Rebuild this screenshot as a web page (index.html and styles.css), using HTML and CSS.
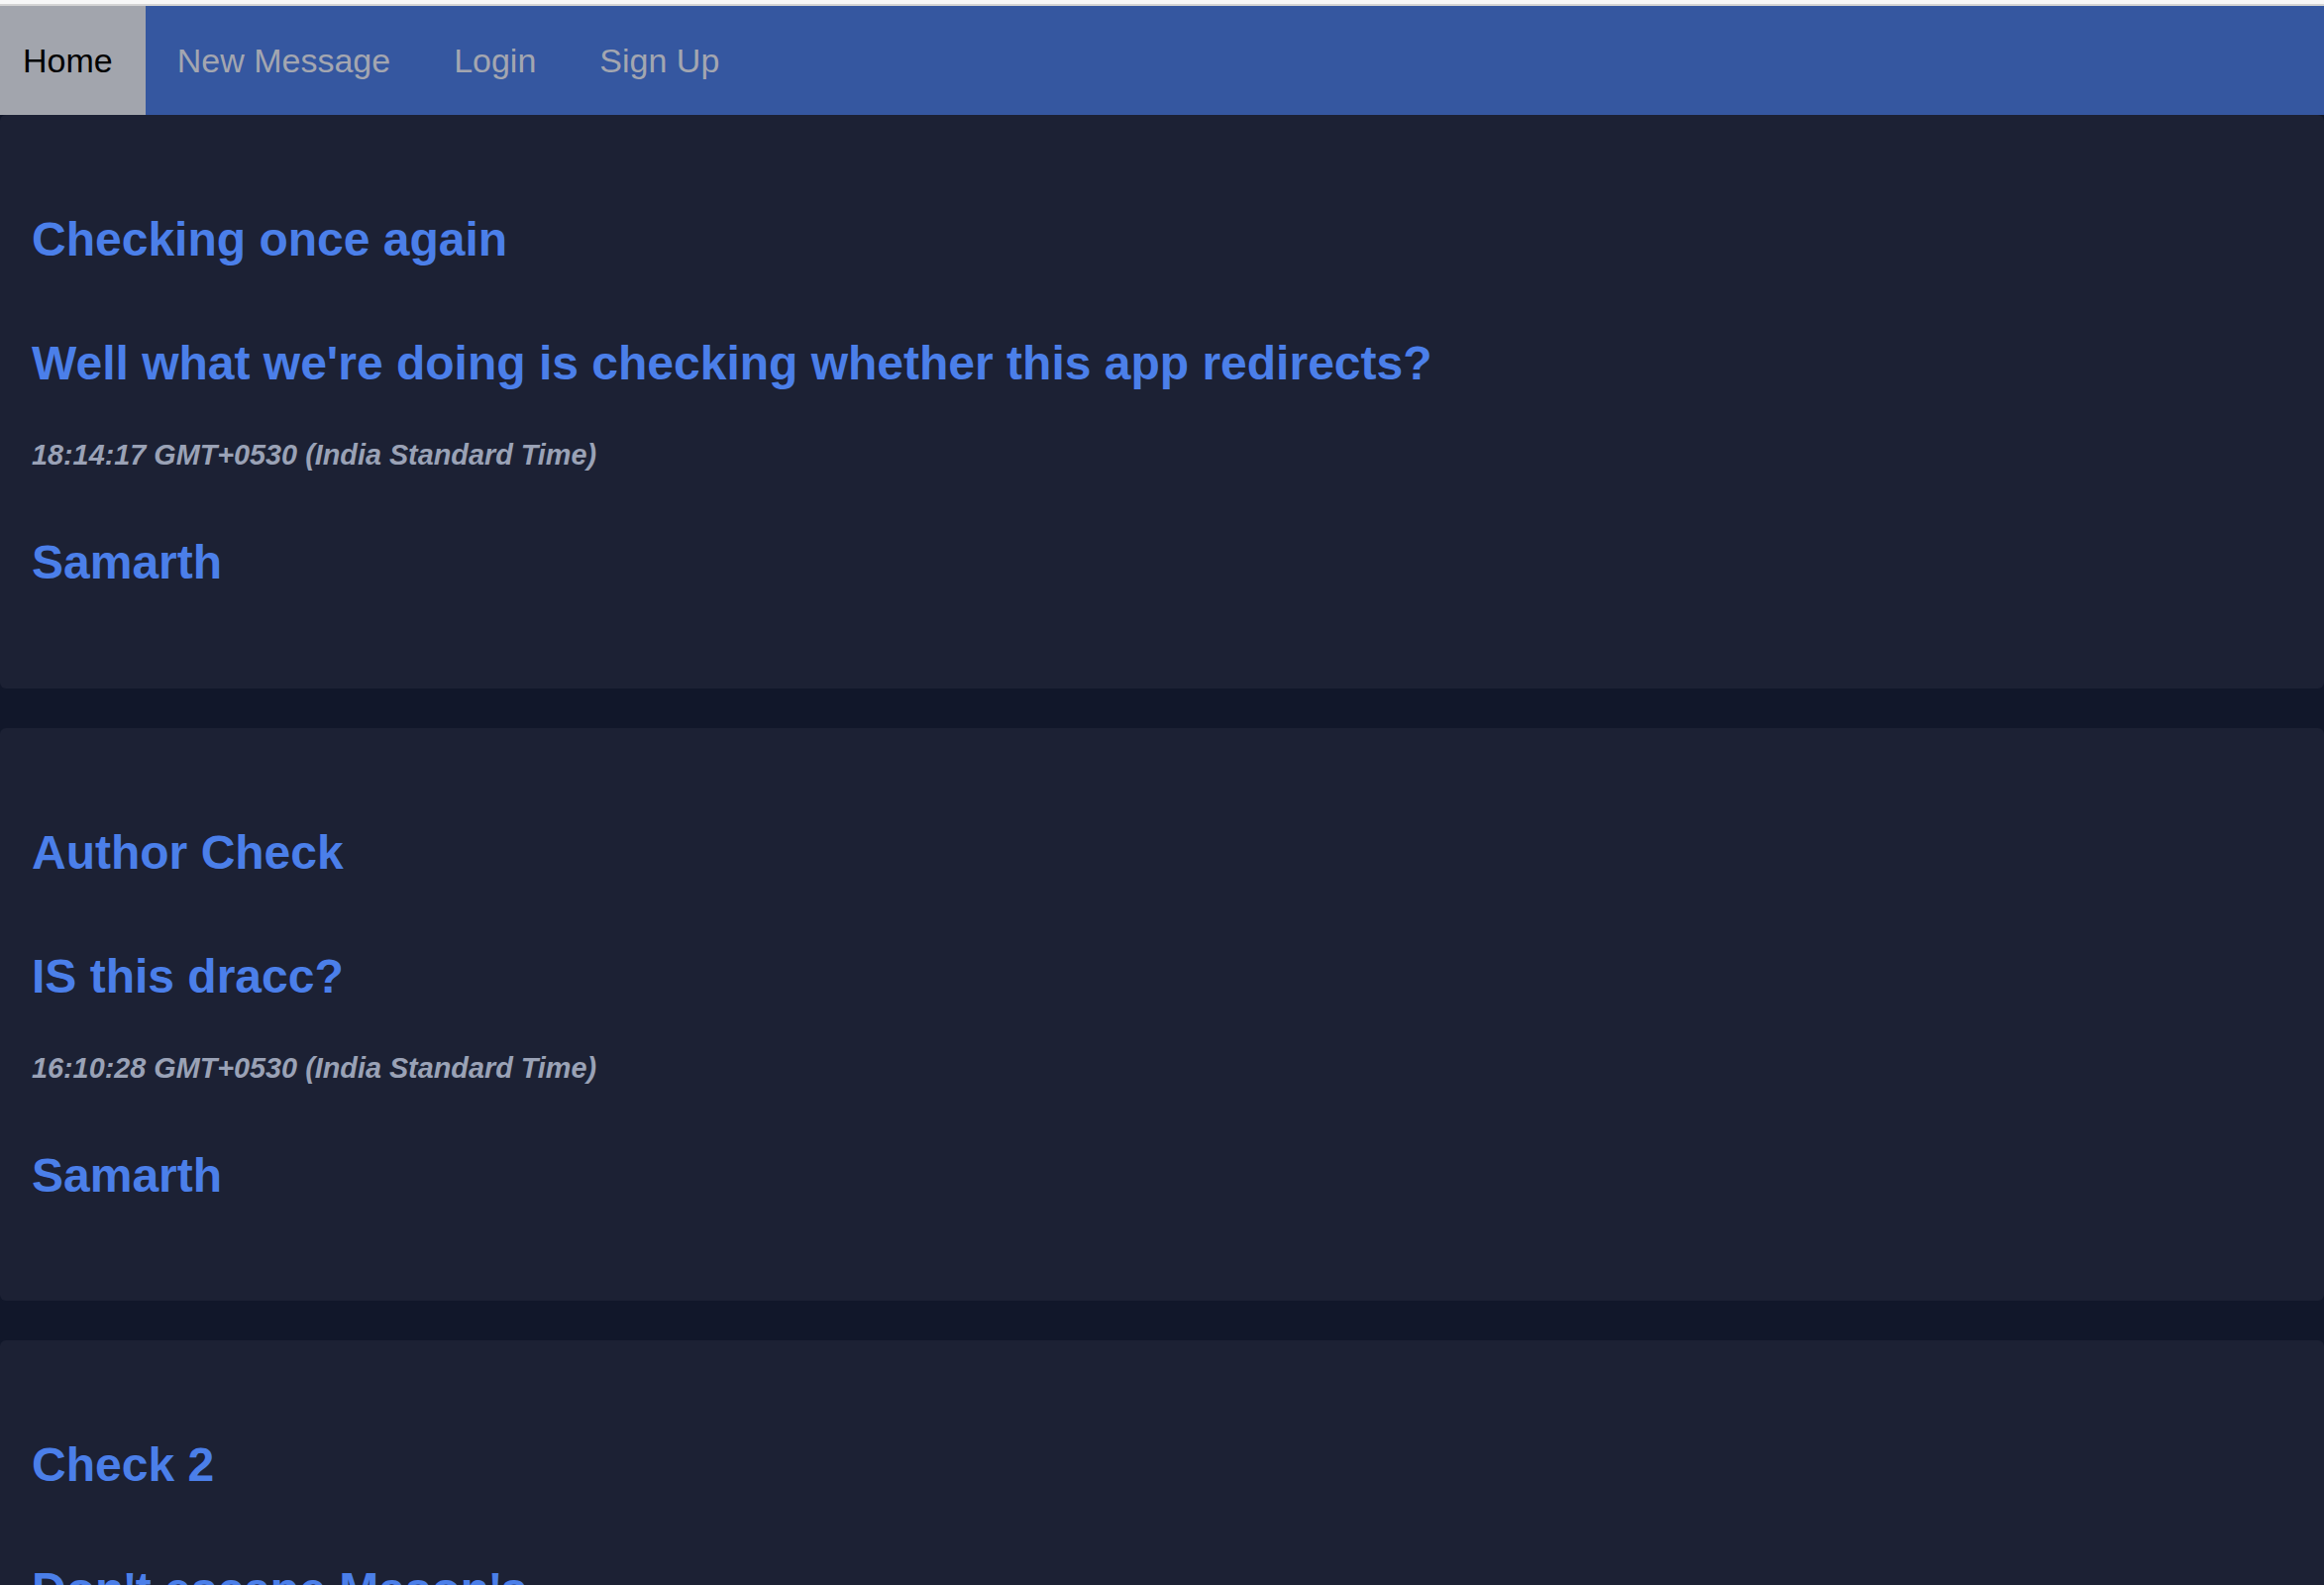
FILE: index.html
```html
<!DOCTYPE html>
<html lang="en">
<head>
<meta charset="utf-8">
<title>Messages</title>
<link rel="stylesheet" href="styles.css">
</head>
<body>
<div class="topstrip"></div>
<nav class="topnav">
  <a class="active" href="#">Home</a>
  <a href="#">New Message</a>
  <a href="#">Login</a>
  <a href="#">Sign Up</a>
</nav>
<main class="feed">
  <article class="card">
    <h1 class="title">Checking once again</h1>
    <h1 class="body">Well what we're doing is checking whether this app redirects?</h1>
    <p class="time">18:14:17 GMT+0530 (India Standard Time)</p>
    <h1 class="author">Samarth</h1>
  </article>
  <article class="card">
    <h1 class="title">Author Check</h1>
    <h1 class="body">IS this dracc?</h1>
    <p class="time">16:10:28 GMT+0530 (India Standard Time)</p>
    <h1 class="author">Samarth</h1>
  </article>
  <article class="card">
    <h1 class="title">Check 2</h1>
    <h1 class="body">Don't escape Mason's</h1>
    <p class="time">15:02:11 GMT+0530 (India Standard Time)</p>
    <h1 class="author">Samarth</h1>
  </article>
</main>
</body>
</html>
```
FILE: styles.css
```css
* { box-sizing: border-box; }
html, body {
  margin: 0;
  padding: 0;
  background: #11172a;
  font-family: "Liberation Sans", Arial, Helvetica, sans-serif;
  overflow: hidden;
}
.topstrip {
  height: 6px;
  background: #f7f7f7;
  border-bottom: 2px solid #d3d3d3;
}
.topnav {
  display: flex;
  align-items: stretch;
  height: 110px;
  background: #3557a0;
}
.topnav a {
  display: flex;
  align-items: center;
  padding: 0 32px;
  font-size: 34px;
  color: #a3a6b0;
  text-decoration: none;
}
.topnav a.active {
  padding: 0 33px 0 23px;
  background: #a2a5ad;
  color: #000;
}
.feed {
  display: flex;
  flex-direction: column;
  gap: 40px;
}
.card {
  background: #1c2134;
  border-radius: 6px;
  padding: 98px 32px 99px 32px;
  display: flex;
  flex-direction: column;
}
.card h1, .card p {
  margin: 0;
  font-weight: bold;
}
.title, .body, .author {
  font-size: 48px;
  line-height: 1.15;
  color: #4b7fe9;
}
.title { margin-bottom: 70px !important; }
.body { margin-bottom: 49px !important; }
.time {
  font-size: 28.8px;
  line-height: 1.15;
  font-style: italic;
  color: #9aa2b6;
  margin-bottom: 64px !important;
}
```
